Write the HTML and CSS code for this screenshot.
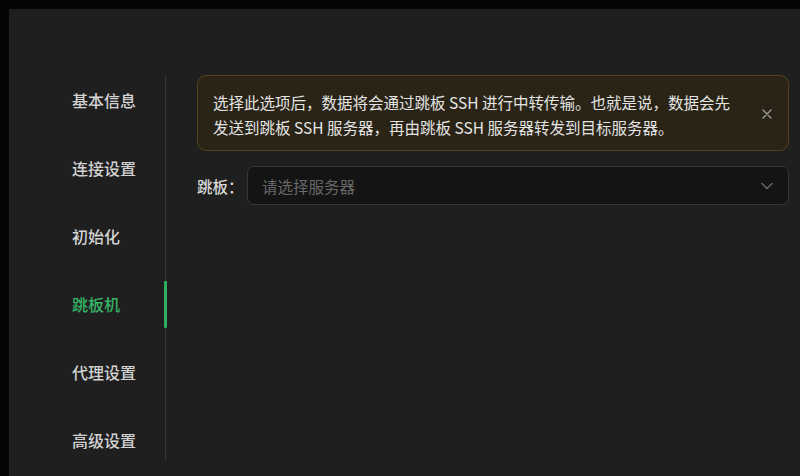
FILE: index.html
```html
<!DOCTYPE html>
<html lang="zh-CN">
<head>
<meta charset="utf-8">
<title>跳板机</title>
<link rel="stylesheet" href="styles.css">
</head>
<body>
<div class="window">
  <aside class="sidebar">
    <ul class="menu">
      <li class="item">基本信息</li>
      <li class="item">连接设置</li>
      <li class="item">初始化</li>
      <li class="item active">跳板机</li>
      <li class="item">代理设置</li>
      <li class="item">高级设置</li>
    </ul>
  </aside>
  <main class="content">
    <div class="alert">
      <p class="alert-text">选择此选项后，数据将会通过跳板 SSH 进行中转传输。也就是说，数据会先<br>发送到跳板 SSH 服务器，再由跳板 SSH 服务器转发到目标服务器。</p>
      <span class="close">
        <svg width="10" height="10" viewBox="0 0 10 10"><path d="M1 1L9 9M9 1L1 9" stroke="#9a9a9a" stroke-width="1.4" stroke-linecap="round"/></svg>
      </span>
    </div>
    <div class="field">
      <label class="label">跳板：</label>
      <div class="select">
        <span class="placeholder">请选择服务器</span>
        <svg class="chevron" width="12" height="8" viewBox="0 0 12 8"><path d="M1 1.5L6 6.5L11 1.5" fill="none" stroke="#6a6a6a" stroke-width="1.4" stroke-linecap="round" stroke-linejoin="round"/></svg>
      </div>
    </div>
  </main>
</div>
</body>
</html>
```
FILE: styles.css
```css
* { box-sizing: border-box; }
html, body { margin: 0; padding: 0; }
body {
  background: #050505;
  padding: 9px 0 0 9px;
  height: 476px;
  overflow: hidden;
  font-family: "Noto Sans CJK SC", "Noto Sans", sans-serif;
}
.window {
  background: #1f1f1f;
  height: 467px;
  display: flex;
  align-items: flex-start;
}
.sidebar {
  width: 157px;
  flex: none;
  margin-top: 66px;
  height: 385px;
  border-right: 1px solid #383838;
}
.menu {
  list-style: none;
  margin: -9px 0 0 0;
  padding: 0 0 0 63px;
}
.item {
  position: relative;
  height: 68px;
  display: flex;
  align-items: center;
  font-size: 16px;
  font-weight: 500;
  color: #d2d2d2;
}
.item.active { color: #36b566; }
.item.active::after {
  content: "";
  position: absolute;
  right: -2px;
  top: 11px;
  width: 3px;
  height: 47px;
  background: #2fb061;
  border-radius: 1px;
}
.content {
  margin: 66px 11px 0 31px;
  flex: 1;
}
.alert {
  height: 76px;
  background: #2a2417;
  border: 1px solid #54421d;
  border-radius: 9px;
  display: flex;
  align-items: flex-start;
  padding: 14px 16px 0 15px;
}
.alert-text {
  margin: 0;
  flex: 1;
  font-size: 15.5px;
  line-height: 25px;
  color: #e4e4e4;
}
.close {
  margin-top: 19px;
  width: 10px;
  height: 10px;
  display: flex;
}
.field {
  margin-top: 15px;
  display: flex;
  align-items: center;
}
.label {
  width: 50px;
  flex: none;
  font-size: 15.5px;
  font-weight: 500;
  color: #d8d8d8;
}
.select {
  flex: 1;
  height: 39px;
  background: #141414;
  border: 1px solid #373737;
  border-radius: 7px;
  display: flex;
  align-items: center;
  padding: 0 15px 0 14px;
}
.placeholder {
  flex: 1;
  font-size: 15.5px;
  color: #686868;
}
.chevron { flex: none; }
```
